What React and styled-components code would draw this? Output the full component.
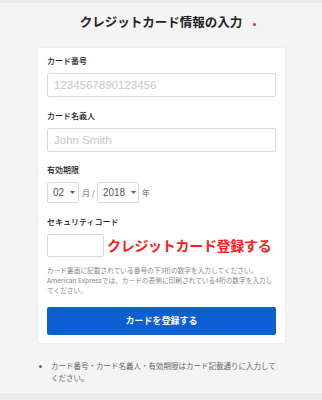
import React from "react";
import styled, { createGlobalStyle } from "styled-components";

const Global = createGlobalStyle`
  html, body { margin: 0; padding: 0; }
  body {
    background: #f4f4f4;
    font-family: "Noto Sans CJK JP", "Liberation Sans", sans-serif;
    -webkit-font-smoothing: antialiased;
  }
  * { box-sizing: border-box; }
`;

const Page = styled.div`
  min-height: 100vh;
  display: flex;
  flex-direction: column;
  background: #f4f4f4;
  border-top: 3px solid #eaeaea;
`;

const Title = styled.h1`
  margin: 9px 0 0;
  text-align: center;
  font-size: 12.5px;
  line-height: 20px;
  font-weight: 700;
  color: #222;
`;

const TitleText = styled.span`
  position: relative;
  display: inline-block;
`;

const Dot = styled.span`
  position: absolute;
  left: calc(100% + 11px);
  top: 11px;
  width: 3px;
  height: 3px;
  border-radius: 50%;
  background: #ff2020;
`;

const Card = styled.div`
  margin: 16px 37px 0 38px;
  background: #fff;
  padding: 7px 9px 8px;
  box-shadow: 0 0 2px rgba(0, 0, 0, 0.08);
`;

const Label = styled.div`
  font-size: 8px;
  line-height: 12px;
  font-weight: 500;
  color: #222;
  margin: ${(p) => (p.$first ? "0" : "12.5px")} 0 6px;
`;

const TextInput = styled.input`
  display: block;
  width: ${(p) => p.$width || "100%"};
  height: ${(p) => p.$height || "24px"};
  border: 1px solid #d6dbe0;
  border-radius: 2px;
  padding: 0 6px;
  font-family: "Liberation Sans", sans-serif;
  font-size: 11.5px;
  color: #333;
  background: #fff;
  outline: none;
  &::placeholder { color: #c4c7ca; }
`;

const Row = styled.div`
  display: flex;
  align-items: center;
  gap: ${(p) => p.$gap || "0"};
`;

const SelectBox = styled.div`
  width: ${(p) => p.$width};
  height: 21px;
  border: 1px solid #d6dbe0;
  border-radius: 2px;
  padding-left: 5px;
  display: flex;
  align-items: center;
  gap: 6px;
  font-family: "Liberation Sans", sans-serif;
  font-size: 10px;
  color: #555;
`;

const Unit = styled.span`
  font-size: 8px;
  color: #666;
  margin: 0 ${(p) => p.$right || "0"} 0 ${(p) => p.$left || "0"};
  font-family: "Noto Sans CJK JP", "Liberation Sans", sans-serif;
`;

const Arrow = () => (
  <svg width="5" height="3" viewBox="0 0 5 3">
    <path d="M0 0 L5 0 L2.5 3 Z" fill="#2b5fd6" />
  </svg>
);

const RedText = styled.span`
  font-size: 14px;
  font-weight: 700;
  line-height: 1;
  color: #ff1a1a;
  letter-spacing: -0.3px;
`;

const Help = styled.p`
  margin: 8px 0 0;
  font-size: 6.7px;
  line-height: 10px;
  color: #888;
`;

const Button = styled.button`
  display: block;
  width: 100%;
  height: 28px;
  margin-top: 12px;
  border: none;
  border-radius: 2px;
  background: #0b5fd0;
  color: #fff;
  font-family: "Noto Sans CJK JP", sans-serif;
  font-size: 9px;
  font-weight: 700;
`;

const Notes = styled.ul`
  margin: 17px 41px 0 38px;
  padding: 0 0 0 13px;
  font-size: 7.5px;
  line-height: 12px;
  color: #666;
  li::marker { font-size: 7px; }
`;

const Footer = styled.div`
  margin-top: auto;
  height: 7px;
  background: #ebebeb;
`;

export default function App() {
  return (
    <>
      <Global />
      <Page>
        <Title>
          <TitleText>
            クレジットカード情報の入力
            <Dot />
          </TitleText>
        </Title>
        <Card>
          <Label $first>カード番号</Label>
          <TextInput placeholder="1234567890123456" />
          <Label>カード名義人</Label>
          <TextInput placeholder="John Smith" />
          <Label>有効期限</Label>
          <Row>
            <SelectBox $width="32px">
              02 <Arrow />
            </SelectBox>
            <Unit $left="3px" $right="2px">月 /</Unit>
            <SelectBox $width="42px">
              2018 <Arrow />
            </SelectBox>
            <Unit $left="3px">年</Unit>
          </Row>
          <Label>セキュリティコード</Label>
          <Row $gap="3px">
            <TextInput $width="57px" $height="23px" />
            <RedText>クレジットカード登録する</RedText>
          </Row>
          <Help>
            カード裏面に記載されている番号の下3桁の数字を入力してください。
            American Expressでは、カードの表側に印刷されている4桁の数字を入力してください。
          </Help>
          <Button>カードを登録する</Button>
        </Card>
        <Notes>
          <li>カード番号・カード名義人・有効期限はカード記載通りに入力してください。</li>
        </Notes>
        <Footer />
      </Page>
    </>
  );
}
